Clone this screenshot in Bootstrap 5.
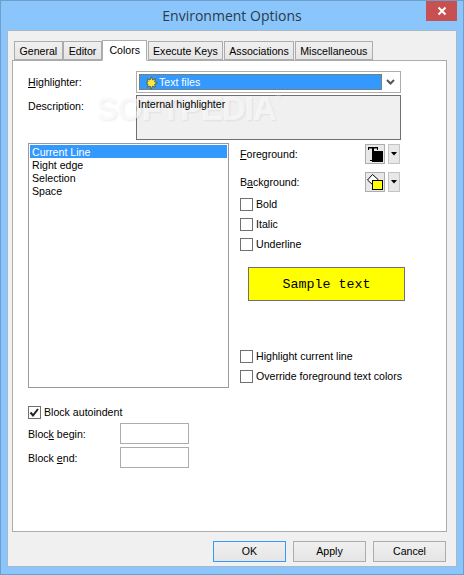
<!DOCTYPE html>
<html lang="en">
<head>
<meta charset="utf-8">
<title>Environment Options</title>
<link href="https://cdn.jsdelivr.net/npm/bootstrap@5.3.0/dist/css/bootstrap.min.css" rel="stylesheet">
<style>
html,body{margin:0;padding:0;width:464px;height:575px;overflow:hidden;background:#8ac6fb}
body{font-family:"Liberation Sans",Arial,sans-serif;font-size:10.6px;line-height:13px;color:#000}
.dlg{height:575px;border:1px solid #6e9ecb;display:flex;flex-direction:column}
.ttl{height:29px;display:grid;grid-template-columns:1fr auto 1fr;align-items:start;flex:none}
.ttl-text{font-family:"Open Sans",sans-serif;font-size:14px;line-height:20px;margin-top:5px;color:#2a3a4a}
.ttl-x{justify-self:end;width:31px;height:20px;background:#c75050;margin-right:6px;display:flex;align-items:center;justify-content:center}
.pnl{flex:none;height:537px;margin:0 6px;background:#f0f0f0;border:1px solid #aab8c4;padding:8px 4px 0 4px;display:flex;flex-direction:column}
.tabs-row{height:21px;border:0;gap:0;padding-left:2px;flex-wrap:nowrap;align-items:flex-end}
.tabs-row .nav-link{font-size:10.6px;line-height:13px;color:#000;height:19px;padding:3px 4.5px 0;border:1px solid #acacac;border-radius:0;margin:0 .5px 0 0;background:linear-gradient(#f0f0f0,#e5e5e5);white-space:nowrap}
.tabs-row .nav-link.active{height:21px;background:#fff;border-color:#acacac #acacac #fff;color:#000;margin:0 .5px -1px 0;padding:3px 6px 0;position:relative;z-index:1}
.pane{width:435px;height:472px;background:#fff;border:1px solid #acacac;padding:10px 0 0 15px;position:relative}
.rw{display:flex;gap:0}
.lbl{width:108px;flex:none}
.lbl-a{padding-top:5px}
.cmb{width:265px;height:22px;border:1px solid #acacac;background:#fff;padding:2px;display:flex}
.cmb-sel{width:243px;height:16px;background:#3399ff;color:#fff;outline:1px dotted #b06a00;outline-offset:-1px;display:flex;align-items:center;gap:1px;padding-left:6px}
.cmb-arw{flex:1;display:flex;align-items:center;justify-content:center}
.dsc{width:265px;height:45px;border:1px solid #6f6f6f;background:#f0f0f0;padding:2px 1px}
.dsc-text{position:relative;z-index:3}
.rw-desc{margin-top:2px}
.rw-main{margin-top:3px}
.lst{width:201px;height:245px;border:1px solid #9a9a9a;padding:1px;border-radius:0;background:#fff;display:block}
.lst .list-group-item{border:0;padding:1px 0 0 2px;height:13px;line-height:13px;font-size:10.6px;background:transparent;color:#000;border-radius:0}
.lst .list-group-item.active{background:#3399ff;color:#fff;margin-bottom:0}
.rgt{margin-left:11px;width:172px}
.clr-row{display:flex;align-items:center;height:20px;margin-top:1px}
.clr-row + .clr-row{margin-top:8px}
.clr-name{width:125px;padding-top:1px}
.cbtn{width:20px;height:20px;border:1px solid #acacac;background:#e8e8e8;padding:0;display:flex;align-items:center;justify-content:center;border-radius:0}
.dbtn{width:12px;height:20px;border:1px solid #c4c4c4;background:#e8e8e8;margin-left:3px;padding:0;display:flex;align-items:center;justify-content:center;border-radius:0}
.ck{display:flex;align-items:center;gap:3px;height:13px;margin:7px 0 0;padding:0;min-height:0}
.ck-first{margin-top:6px}
.ck-low{margin-top:49px}
.ck-auto{margin-top:18px}
.ck .form-check-input{float:none;margin:0;width:13px;height:13px;border:1px solid #707070;border-radius:0;background-color:#fff;flex:none}
.ck .form-check-input:checked{background-color:#fff;border-color:#707070;background-image:url("data:image/svg+xml,%3csvg xmlns='http://www.w3.org/2000/svg' viewBox='0 0 13 13'%3e%3cpath fill='none' stroke='%23222' stroke-width='2' d='M2.5 6.500l2.500 3 5-6.500'/%3e%3c/svg%3e");background-size:13px 13px}
.ck .form-check-label{line-height:13px;white-space:nowrap}
.smp{width:157px;height:34px;margin:16px 0 0 8px;background:#ff0;border:1px solid #707070;font-family:"Liberation Mono",monospace;font-size:13.3px;display:flex;align-items:center;justify-content:center}
.inp{width:69px;height:21px;border:1px solid #acacac;background:#fff;border-radius:0;padding:0}
.blk{display:flex;align-items:center;height:21px;margin-top:3px}
.blk-first{margin-top:4px}
.blk-lbl{width:92px;padding-top:1px}
.foot{display:flex;justify-content:flex-end;gap:7px;padding:9px 6px 0 0}
.fbtn{width:73px;height:21px;padding:0;font-size:10.6px;line-height:13px;color:#000;border:1px solid #acacac;background:linear-gradient(#f0f0f0,#e5e5e5);border-radius:0}
.fbtn.dflt{border-color:#3399ff}
.wm{position:absolute;left:83px;top:30px;z-index:2;font-size:33px;line-height:36px;font-weight:700;color:rgba(255,255,255,.65);text-shadow:1px 1px 2px rgba(0,0,0,.07);letter-spacing:-1px;pointer-events:none;white-space:nowrap}
.wm-r{font-size:7px;font-weight:400;vertical-align:top;line-height:12px;letter-spacing:0}
</style>
</head>
<body>
<div class="dlg">
  <div class="ttl">
    <span></span>
    <div class="ttl-text">Environment Options</div>
    <div class="ttl-x"><svg width="10" height="10" viewBox="0 0 10 10"><path d="M1.500 1.500l7 7M8.500 1.500l-7 7" stroke="#fff" stroke-width="2"/></svg></div>
  </div>
  <div class="pnl">
    <ul class="nav nav-tabs tabs-row">
      <li class="nav-item"><a class="nav-link" href="#">General</a></li>
      <li class="nav-item"><a class="nav-link" href="#">Editor</a></li>
      <li class="nav-item"><a class="nav-link active" href="#">Colors</a></li>
      <li class="nav-item"><a class="nav-link" href="#">Execute Keys</a></li>
      <li class="nav-item"><a class="nav-link" href="#">Associations</a></li>
      <li class="nav-item"><a class="nav-link" href="#">Miscellaneous</a></li>
    </ul>
    <div class="pane">
      <div class="wm">SOFTPEDIA<span class="wm-r">®</span></div>
      <div class="rw">
        <div class="lbl lbl-a"><u>H</u>ighlighter:</div>
        <div class="cmb">
          <div class="cmb-sel">
            <svg width="13" height="13" viewBox="0 0 13 13"><path d="M6.500 1l1.200 3 3-1.200-1.200 3 3 1.200-3 1.200 1 2.800-3-1-1.200 3-1.200-3-3 1 1-2.800-2-1.200 2-1.200-1-3 3 1.200z" fill="#ffe94a" stroke="#5a5a20" stroke-width=".8"/></svg>
            <span>Text files</span>
          </div>
          <div class="cmb-arw"><svg width="9" height="6" viewBox="0 0 9 6"><path d="M1 1l3.500 3.500L8 1" fill="none" stroke="#555" stroke-width="2"/></svg></div>
        </div>
      </div>
      <div class="rw rw-desc">
        <div class="lbl lbl-a">Description:</div>
        <div class="dsc"><span class="dsc-text">Internal highlighter</span></div>
      </div>
      <div class="rw rw-main">
        <div class="list-group lst">
          <div class="list-group-item active">Current Line</div>
          <div class="list-group-item">Right edge</div>
          <div class="list-group-item">Selection</div>
          <div class="list-group-item">Space</div>
        </div>
        <div class="rgt">
          <div class="clr-row">
            <div class="clr-name"><u>F</u>oreground:</div>
            <button class="cbtn" type="button" aria-label="Foreground colour"><svg width="18" height="18" viewBox="0 0 18 18"><rect x="6" y="6" width="11" height="11" fill="#000"/><path d="M2 2h10v3H11V3.500H8V15h2v1H4v-1h2V3.500H3V5H2z" fill="#000"/></svg></button>
            <button class="dbtn" type="button" aria-label="Foreground menu"><svg width="6" height="4" viewBox="0 0 6 4"><path d="M0 0h6L3 3.500z" fill="#000"/></svg></button>
          </div>
          <div class="clr-row">
            <div class="clr-name">B<u>a</u>ckground:</div>
            <button class="cbtn" type="button" aria-label="Background colour"><svg width="18" height="18" viewBox="0 0 18 18"><path d="M1.500 7L6.500 1.500 12 6.500 7 12z" fill="#fff" stroke="#000"/><rect x="6.500" y="7.500" width="10" height="9" fill="#ff0" stroke="#000"/></svg></button>
            <button class="dbtn" type="button" aria-label="Background menu"><svg width="6" height="4" viewBox="0 0 6 4"><path d="M0 0h6L3 3.500z" fill="#000"/></svg></button>
          </div>
          <div class="form-check ck ck-first"><input class="form-check-input" type="checkbox" id="c1"><label class="form-check-label" for="c1">Bold</label></div>
          <div class="form-check ck"><input class="form-check-input" type="checkbox" id="c2"><label class="form-check-label" for="c2">Italic</label></div>
          <div class="form-check ck"><input class="form-check-input" type="checkbox" id="c3"><label class="form-check-label" for="c3">Underline</label></div>
          <div class="smp">Sample text</div>
          <div class="form-check ck ck-low"><input class="form-check-input" type="checkbox" id="c4"><label class="form-check-label" for="c4">Highlight current line</label></div>
          <div class="form-check ck"><input class="form-check-input" type="checkbox" id="c5"><label class="form-check-label" for="c5">Override foreground text colors</label></div>
        </div>
      </div>
      <div class="form-check ck ck-auto"><input class="form-check-input" type="checkbox" id="c6" checked><label class="form-check-label" for="c6">Block autoindent</label></div>
      <div class="blk blk-first"><div class="blk-lbl">Bloc<u>k</u> begin:</div><input class="inp" type="text" aria-label="Block begin"></div>
      <div class="blk"><div class="blk-lbl">Block <u>e</u>nd:</div><input class="inp" type="text" aria-label="Block end"></div>
    </div>
    <div class="foot">
      <button class="btn fbtn dflt" type="button">OK</button>
      <button class="btn fbtn" type="button">Apply</button>
      <button class="btn fbtn" type="button">Cancel</button>
    </div>
  </div>
</div>
<script src="https://cdn.jsdelivr.net/npm/bootstrap@5.3.0/dist/js/bootstrap.bundle.min.js"></script>
</body>
</html>
